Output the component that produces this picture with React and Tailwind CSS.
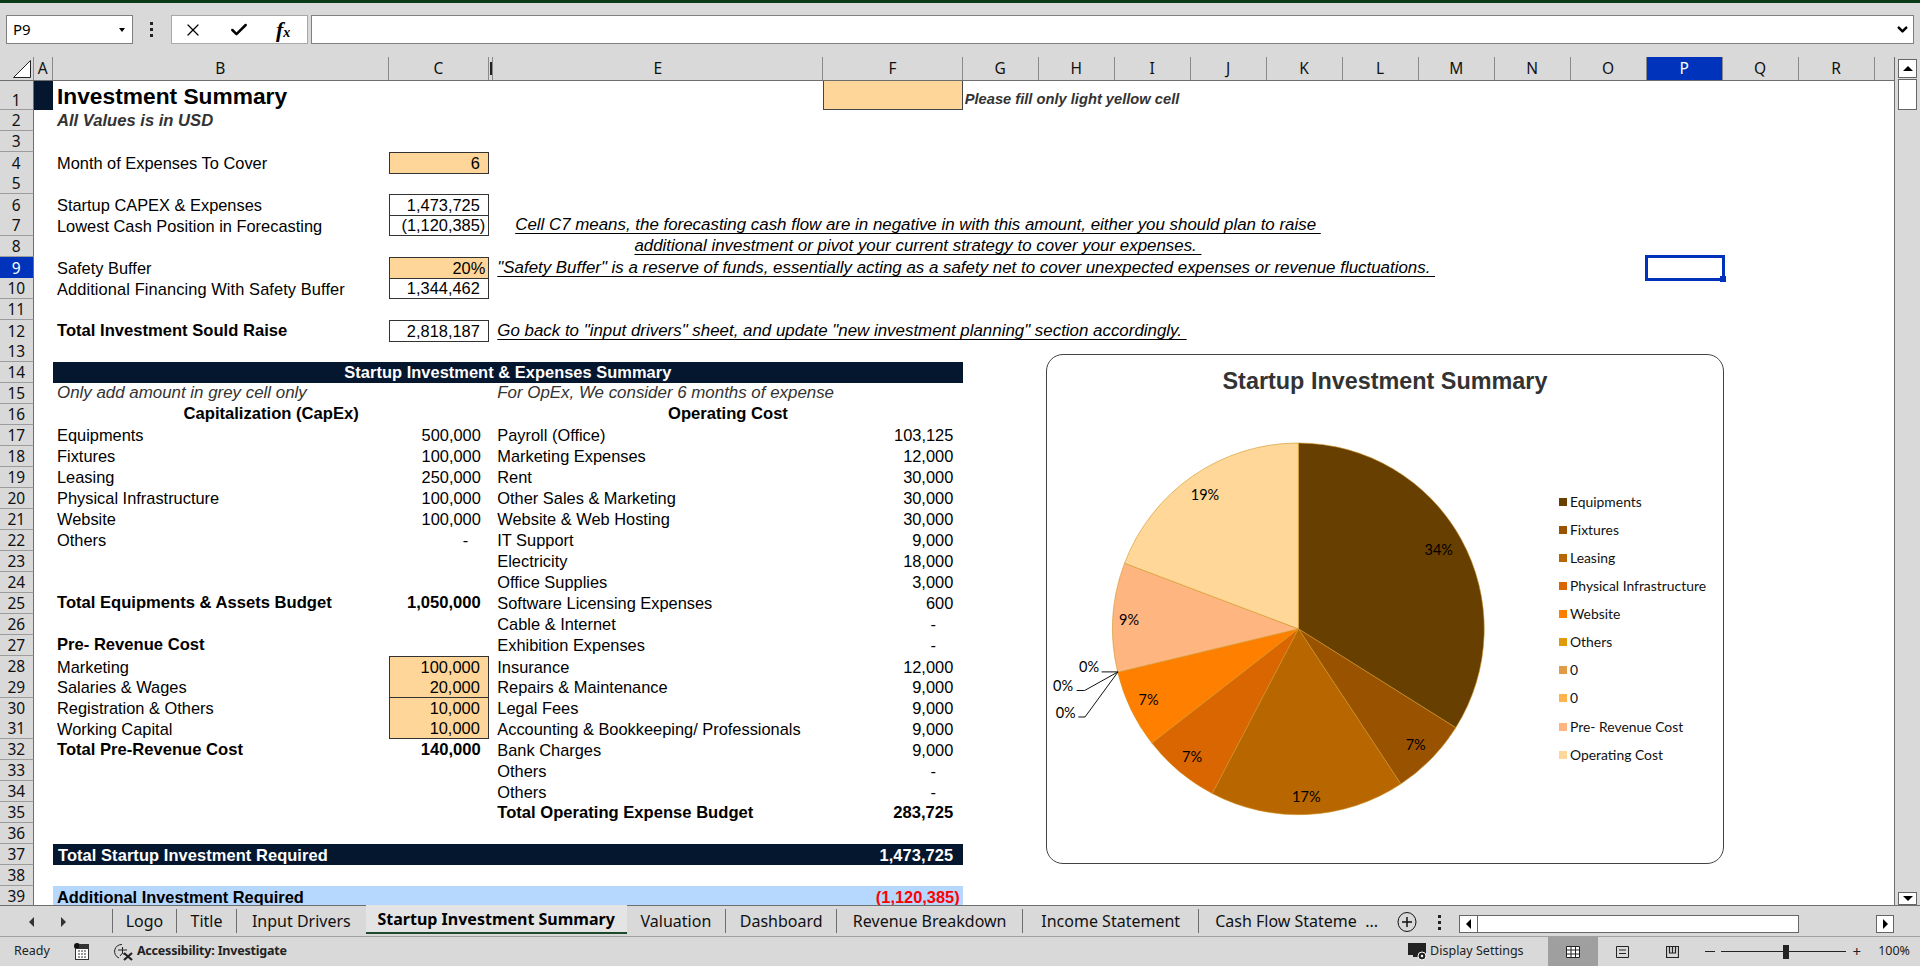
import React from 'react'
import { Check, ChevronDown, X } from 'lucide-react'

const cols = 'grid grid-cols-[33.5px_19.5px_335.7px_100.6px_4px_330px_139.4px_repeat(12,76px)_20px]'
const input = 'bg-[#ffd699]'
const boxed = 'border-x border-b border-[#333333]'
const boxedTop = 'border border-[#333333]'
const bold = 'font-bold text-[16.6px]'
const under = 'underline underline-offset-[3px] decoration-1 italic whitespace-pre text-[16.9px]'

const ledger = [
  { n: 17, b: 'Equipments', c: '500,000', e: 'Payroll (Office)', f: '103,125' },
  { n: 18, b: 'Fixtures', c: '100,000', e: 'Marketing Expenses', f: '12,000' },
  { n: 19, b: 'Leasing', c: '250,000', e: 'Rent', f: '30,000' },
  { n: 20, b: 'Physical Infrastructure', c: '100,000', e: 'Other Sales & Marketing', f: '30,000' },
  { n: 21, b: 'Website', c: '100,000', e: 'Website & Web Hosting', f: '30,000' },
  { n: 22, b: 'Others', c: '-', e: 'IT Support', f: '9,000' },
  { n: 23, e: 'Electricity', f: '18,000' },
  { n: 24, e: 'Office Supplies', f: '3,000' },
  { n: 25, b: 'Total Equipments & Assets Budget', c: '1,050,000', e: 'Software Licensing Expenses', f: '600', bold: true },
  { n: 26, e: 'Cable & Internet', f: '-' },
  { n: 27, b: 'Pre- Revenue Cost', e: 'Exhibition Expenses', f: '-', bold: true },
  { n: 28, b: 'Marketing', c: '100,000', e: 'Insurance', f: '12,000', cell: `${input} ${boxedTop}` },
  { n: 29, b: 'Salaries & Wages', c: '20,000', e: 'Repairs & Maintenance', f: '9,000', cell: `${input} ${boxed}` },
  { n: 30, b: 'Registration & Others', c: '10,000', e: 'Legal Fees', f: '9,000', cell: `${input} ${boxed}` },
  { n: 31, b: 'Working Capital', c: '10,000', e: 'Accounting & Bookkeeping/ Professionals', f: '9,000', cell: `${input} ${boxed}` },
  { n: 32, b: 'Total Pre-Revenue Cost', c: '140,000', e: 'Bank Charges', f: '9,000', bold: true },
  { n: 33, e: 'Others', f: '-' },
  { n: 34, e: 'Others', f: '-' },
  { n: 35, e: 'Total Operating Expense Budget', f: '283,725', eBold: true },
]

const letters = ['G', 'H', 'I', 'J', 'K', 'L', 'M', 'N', 'O', 'P', 'Q', 'R']

const pie = [
  { name: 'Equipments', value: 500000, color: '#673f00' },
  { name: 'Fixtures', value: 100000, color: '#995200' },
  { name: 'Leasing', value: 250000, color: '#b86600' },
  { name: 'Physical Infrastructure', value: 100000, color: '#d96600' },
  { name: 'Website', value: 100000, color: '#ff8000' },
  { name: 'Others', value: 0, color: '#e09b0b' },
  { name: '0', value: 0, color: '#df9b45' },
  { name: '0', value: 0, color: '#ffb34d' },
  { name: 'Pre- Revenue Cost', value: 140000, color: '#ffb580' },
  { name: 'Operating Cost', value: 283725, color: '#ffd899' },
]

const pieLabels = [
  ['34%', 391.7, 194.7],
  ['7%', 368.7, 390.4],
  ['17%', 259.3, 442.4],
  ['7%', 145, 402],
  ['7%', 101.5, 344.6],
  ['9%', 82, 264.6],
  ['19%', 158, 140.4],
  ['0%', 42, 311.7],
  ['0%', 16, 331.4],
  ['0%', 18.7, 358],
]

const tabs = [
  ['Logo', 'w-[64px]'],
  ['Title', 'w-[60px]'],
  ['Input Drivers', 'w-[129.7px]'],
]
const tabsAfter = [
  ['Valuation', 'w-[98.5px]'],
  ['Dashboard', 'w-[111px]'],
  ['Revenue Breakdown', 'w-[186px]'],
  ['Income Statement', 'w-[176px]'],
  ['Cash Flow Stateme  ...', 'w-[198.5px]'],
]

function slicePath(start, end) {
  const cx = 251.4
  const cy = 273.85
  const r = 185.85
  const a = (start * Math.PI) / 180
  const b = (end * Math.PI) / 180
  const large = end - start > 180 ? 1 : 0
  return `M${cx} ${cy}L${cx + r * Math.sin(a)} ${cy - r * Math.cos(a)}A${r} ${r} 0 ${large} 1 ${cx + r * Math.sin(b)} ${cy - r * Math.cos(b)}Z`
}

function Row({ n, tall, active, children }) {
  return (
    <div className={`${cols} ${tall ? 'h-[29.4px]' : 'h-[20.98px]'}`}>
      <div
        className={`flex justify-center border-r border-b border-r-[#6e6e6e] border-b-[#9c9c9c] font-['Noto_Sans',sans-serif] text-[15.5px] leading-[14px] ${
          tall ? 'items-end pb-[2px]' : 'items-center'
        } ${active ? 'bg-[#0033bb] text-white' : 'bg-[#d9d9d9] text-[#111111]'}`}
      >
        {n}
      </div>
      {children}
    </div>
  )
}

const B = ({ children, className = '' }) => (
  <div className={`col-start-3 flex items-center whitespace-nowrap pl-[4px] ${className}`}>{children}</div>
)

const C = ({ children, className = '' }) => (
  <div className={`col-start-4 flex items-center justify-end whitespace-nowrap ${className}`}>{children}</div>
)

const E = ({ children, className = '' }) => (
  <div className={`col-start-6 flex items-center whitespace-nowrap pl-[4px] ${className}`}>{children}</div>
)

function LedgerRow({ item }) {
  const dashC = item.c === '-'
  const dashF = item.f === '-'
  return (
    <Row n={item.n}>
      {item.b && <B className={item.bold ? bold : ''}>{item.b}</B>}
      {item.c && (
        <C className={`${dashC ? 'pr-[21px]' : 'pr-[8.5px]'} ${item.cell || ''} ${item.bold ? bold : ''}`}>{item.c}</C>
      )}
      <E className={item.eBold ? bold : ''}>{item.e}</E>
      <div
        className={`col-start-7 flex items-center justify-end ${dashF ? 'pr-[26.7px]' : 'pr-[9.4px]'} ${
          item.eBold ? bold : ''
        }`}
      >
        {item.f}
      </div>
    </Row>
  )
}

function FormulaBar() {
  return (
    <div className="flex h-[54px] items-start pt-3">
      <div className="ml-[6px] flex h-[29px] w-[127px] items-center justify-between border border-[#808080] bg-white pl-[6px] pr-[7px] font-['Noto_Sans',sans-serif] text-[15px]">
        P9
        <span className="h-0 w-0 border-x-[3.5px] border-t-[4px] border-x-transparent border-t-black" />
      </div>
      <div className="ml-[17px] flex h-[29px] w-[3px] flex-col items-center justify-center gap-[3px]">
        <span className="h-[3px] w-[3px] bg-[#222222]" />
        <span className="h-[3px] w-[3px] bg-[#222222]" />
        <span className="h-[3px] w-[3px] bg-[#222222]" />
      </div>
      <div className="ml-[18px] flex h-[29px] w-[136.5px] items-center border border-[#a8a8a8] bg-white">
        <X className="ml-[11px] h-[20px] w-[20px]" strokeWidth={1.5} />
        <Check className="ml-[26px] h-[20px] w-[20px]" strokeWidth={3} />
        <span className="ml-[27px] font-['Liberation_Serif',serif] text-[22px] font-bold italic leading-none">
          f<span className="text-[14px]">x</span>
        </span>
      </div>
      <div className="ml-[3.5px] mr-[6.5px] flex h-[29px] flex-1 items-center justify-end border border-[#808080] bg-white pr-[3px]">
        <ChevronDown className="h-[15px] w-[15px]" strokeWidth={4} />
      </div>
    </div>
  )
}

function ColumnHeader() {
  const head = "flex items-center justify-center border-r border-[#8a8a8a] font-['Noto_Sans',sans-serif] text-[15.5px] text-[#111111]"
  return (
    <div className={`${cols} h-[24px] border-b border-[#6e6e6e]`}>
      <div className="flex items-end justify-end border-r border-[#8a8a8a] pb-[2px] pr-[2px]">
        <svg width="18" height="18" viewBox="0 0 18 18">
          <path d="M0.5 17.5L17.5 0.5V17.5Z" fill="white" stroke="#222222" />
        </svg>
      </div>
      <div className={head}>A</div>
      <div className={head}>B</div>
      <div className={head}>C</div>
      <div className="flex items-center justify-center border-r border-[#8a8a8a]">
        <span className="h-[13px] w-[1.5px] bg-[#222222]" />
      </div>
      <div className={head}>E</div>
      <div className={head}>F</div>
      {letters.map((l) => (
        <div key={l} className={l === 'P' ? `${head} bg-[#0033bb] !text-white` : head}>
          {l}
        </div>
      ))}
    </div>
  )
}

function Chart() {
  let angle = 0
  const slices = pie
    .filter((s) => s.value > 0)
    .map((s) => {
      const sweep = (s.value / 1473725) * 360
      const d = slicePath(angle, angle + sweep)
      angle += sweep
      return { ...s, d }
    })

  return (
    <div className="absolute left-[1046px] top-[273.3px] h-[509.5px] w-[678px] rounded-[17px] border border-[#444444] bg-white">
      <div className="pt-[10.7px] text-center text-[23.4px] font-bold leading-[30px] text-[#333333]">Startup Investment Summary</div>
      <svg className="absolute left-0 top-0" width="676" height="507" viewBox="0 0 676 507">
        {slices.map((s) => (
          <path key={s.name} d={s.d} fill={s.color} stroke="#cf9322" strokeWidth="0.6" />
        ))}
        <g className="font-['Lato',sans-serif] text-[14.5px]" textAnchor="middle" fill="#000000">
          {pieLabels.map(([t, x, y], i) => (
            <text key={i} x={x} y={y + 5}>
              {t}
            </text>
          ))}
        </g>
        <g fill="none" stroke="#111111" strokeWidth="1">
          <path d="M54.6 316.9H71" />
          <path d="M29.6 335.5H37.6L71 316.9" />
          <path d="M31.3 362H38L71 316.9" />
        </g>
      </svg>
      <div className="absolute left-[512px] top-[132.7px] flex flex-col font-['Lato',sans-serif] text-[13.9px]">
        {pie.map((s, i) => (
          <div key={i} className="flex h-[28.07px] items-center gap-[3px] text-[#111111]">
            <span className="h-[8px] w-[8px]" style={{ backgroundColor: s.color }} />
            {s.name}
          </div>
        ))}
      </div>
    </div>
  )
}

function Sheet() {
  return (
    <div className="flex h-[848px] overflow-hidden">
      <div className="w-[1895px] shrink-0 border-r border-[#6e6e6e]">
        <ColumnHeader />
        <div className="relative h-[824px] overflow-hidden bg-white font-['Liberation_Sans',Arial,sans-serif] text-[16.4px] leading-[20px] text-black">
          <Row n={1} tall>
            <div className="col-start-2 bg-[#04172f]" />
            <B className="pt-[1px] text-[22.75px] font-bold">Investment Summary</B>
            <div className="col-start-7 border-x border-b border-[#444444] bg-[#ffd699]" />
            <div className="col-start-8 flex items-center whitespace-nowrap pl-[2px] pt-[7px] text-[14.7px] font-bold italic text-[#333333]">
              Please fill only light yellow cell
            </div>
          </Row>
          <Row n={2}>
            <B className="pt-[1px] text-[16.6px] font-bold italic text-[#333333]">All Values is in USD</B>
          </Row>
          <Row n={3} />
          <Row n={4}>
            <B>Month of Expenses To Cover</B>
            <C className={`pr-[8.5px] ${input} ${boxedTop}`}>6</C>
          </Row>
          <Row n={5} />
          <Row n={6}>
            <B>Startup CAPEX &amp; Expenses</B>
            <C className={`pr-[8.5px] ${boxedTop}`}>1,473,725</C>
          </Row>
          <Row n={7}>
            <B>Lowest Cash Position in Forecasting</B>
            <C className={`pr-[3px] ${boxed}`}>(1,120,385)</C>
            <div className={`col-start-6 col-span-7 text-center ${under}`}>Cell C7 means, the forecasting cash flow are in negative in with this amount, either you should plan to raise </div>
          </Row>
          <Row n={8}>
            <div className={`col-start-6 col-span-7 text-center ${under}`}>additional investment or pivot your current strategy to cover your expenses. </div>
          </Row>
          <Row n={9} active>
            <B>Safety Buffer</B>
            <C className={`pr-[3px] ${input} ${boxedTop}`}>20%</C>
            <E className={under}>"Safety Buffer" is a reserve of funds, essentially acting as a safety net to cover unexpected expenses or revenue fluctuations. </E>
            <div className="relative col-start-17">
              <div className="absolute -inset-x-[2px] -inset-y-[2px] border-[3px] border-[#0033bb]">
                <span className="absolute -bottom-[4px] -right-[4px] h-[6px] w-[6px] bg-[#0033bb]" />
              </div>
            </div>
          </Row>
          <Row n={10}>
            <B className="tracking-[0.1px]">Additional Financing With Safety Buffer</B>
            <C className={`pr-[8.5px] ${boxed}`}>1,344,462</C>
          </Row>
          <Row n={11} />
          <Row n={12}>
            <B className={bold}>Total Investment Sould Raise</B>
            <C className={`pr-[8.5px] ${boxedTop}`}>2,818,187</C>
            <E className={under}>Go back to "input drivers" sheet, and update "new investment planning" section accordingly. </E>
          </Row>
          <Row n={13} />
          <Row n={14}>
            <div className="col-start-3 col-span-5 bg-[#04172f] text-center font-bold tracking-[0.05px] text-white">Startup Investment &amp; Expenses Summary</div>
          </Row>
          <Row n={15}>
            <B className="text-[16.9px] italic text-[#333333]">Only add amount in grey cell only</B>
            <E className="text-[16.9px] italic text-[#333333]">For OpEx, We consider 6 months of expense</E>
          </Row>
          <Row n={16}>
            <div className={`col-start-3 col-span-2 text-center ${bold}`}>Capitalization (CapEx)</div>
            <div className={`col-start-6 col-span-2 text-center ${bold}`}>Operating Cost</div>
          </Row>
          {ledger.map((item) => (
            <LedgerRow key={item.n} item={item} />
          ))}
          <Row n={36} />
          <Row n={37}>
            <div className="col-start-3 col-span-5 flex items-center justify-between bg-[#04172f] pl-[5px] pr-[9.4px] font-bold tracking-[0.1px] text-white">
              <span>Total Startup Investment Required</span>
              <span>1,473,725</span>
            </div>
          </Row>
          <Row n={38} />
          <Row n={39}>
            <div className="col-start-3 col-span-5 flex items-center justify-between bg-[#b6d7fe] pl-[4px] pr-[3px] font-bold leading-[14px]">
              <span>Additional Investment Required</span>
              <span className="text-[#ff0000]">(1,120,385)</span>
            </div>
          </Row>
          <Chart />
        </div>
      </div>
      <div className="flex flex-1 flex-col items-center pt-[2px]">
        <div className="flex h-[19px] w-[19px] items-center justify-center border border-[#666666] bg-white">
          <span className="h-0 w-0 border-x-[5px] border-b-[5px] border-x-transparent border-b-black" />
        </div>
        <div className="mt-[1px] h-[31px] w-[19px] border border-[#666666] bg-white" />
        <div className="mt-auto flex h-[13px] w-[19px] items-center justify-center border border-[#666666] bg-white">
          <span className="h-0 w-0 border-x-[5px] border-t-[5px] border-x-transparent border-t-black" />
        </div>
      </div>
    </div>
  )
}

function TabBar() {
  const tab = "flex h-[24px] shrink-0 items-center justify-center whitespace-pre border-l border-[#6e6e6e] text-[#111111]"
  return (
    <div className="flex h-[32px] border-b border-[#a0a0a0] font-['Noto_Sans',sans-serif] text-[16px]">
      <div className="flex h-[32px] w-[112px] shrink-0 items-center border-t border-[#6e6e6e]">
        <span className="ml-[29px] h-0 w-0 border-y-[5px] border-r-[5px] border-y-transparent border-r-[#333333]" />
        <span className="ml-[27px] h-0 w-0 border-y-[5px] border-l-[5px] border-y-transparent border-l-[#333333]" />
      </div>
      <div className="flex border-t border-[#6e6e6e] pt-[3px]">
        {tabs.map(([t, w]) => (
          <div key={t} className={`${tab} ${w}`}>
            {t}
          </div>
        ))}
      </div>
      <div className="flex h-[29px] w-[261px] shrink-0 items-center justify-center border-b-[2px] border-[#1c4a2a] bg-[#e4e4e4] font-bold text-black">
        Startup Investment Summary
      </div>
      <div className="flex flex-1 items-start border-t border-[#6e6e6e] pt-[3px]">
        {tabsAfter.map(([t, w], i) => (
          <div key={t} className={`${tab} ${w} ${i === 0 ? '!border-l-0' : ''} ${i === 4 ? '!justify-start pl-[16px]' : ''}`}>
            {t}
          </div>
        ))}
        <svg className="mt-[3px] shrink-0" width="20" height="20" viewBox="0 0 20 20" fill="none" stroke="#111111">
          <ellipse cx="10" cy="10" rx="9" ry="9.5" />
          <path d="M5 10H15M10 5V15" strokeWidth="1.5" />
        </svg>
        <div className="ml-[21px] mt-[6px] flex shrink-0 flex-col gap-[3px]">
          <span className="h-[3px] w-[3px] bg-[#222222]" />
          <span className="h-[3px] w-[3px] bg-[#222222]" />
          <span className="h-[3px] w-[3px] bg-[#222222]" />
        </div>
        <div className="ml-[18px] mt-[6px] flex h-[18px] w-[340.6px] shrink-0 border border-[#666666] bg-white">
          <div className="flex w-[18px] items-center justify-center border-r border-[#666666]">
            <span className="h-0 w-0 border-y-[5px] border-r-[5px] border-y-transparent border-r-black" />
          </div>
        </div>
        <div className="ml-[77px] mt-[6px] flex h-[18px] w-[18px] shrink-0 items-center justify-center border border-[#666666] bg-white">
          <span className="h-0 w-0 border-y-[5px] border-l-[5px] border-y-transparent border-l-black" />
        </div>
      </div>
    </div>
  )
}

function StatusBar() {
  return (
    <div className="flex h-[29px] items-center font-['Noto_Sans',sans-serif] text-[12.5px] text-[#222222]">
      <span className="ml-[14px]">Ready</span>
      <svg className="ml-[24px]" width="16" height="18" viewBox="0 0 16 18">
        <circle cx="3" cy="3" r="3" fill="#111111" />
        <rect x="5" y="1" width="10" height="4" fill="#333333" />
        <rect x="1.5" y="5.5" width="13" height="11" fill="white" stroke="#333333" />
        <path d="M4 8H12M4 11H12M4 14H12" stroke="#333333" strokeDasharray="2 1" />
      </svg>
      <svg className="ml-[24px]" width="20" height="18" viewBox="0 0 20 18" fill="none" stroke="#222222">
        <path d="M8 1.5A7 7 0 0 0 5 15" />
        <path d="M4 7H13M8.5 4V10L6 13M8.5 10L10.5 12" />
        <path d="M10 10L18 17M18 10L10 17" strokeWidth="2.2" />
      </svg>
      <span className="ml-[3px] font-bold tracking-[-0.2px]">Accessibility: Investigate</span>
      <div className="ml-auto flex items-center">
        <svg width="20" height="18" viewBox="0 0 20 18">
          <rect x="0" y="0" width="18" height="12" fill="#222222" />
          <rect x="5" y="12" width="6" height="2" fill="#222222" />
          <circle cx="14" cy="13" r="4" fill="#222222" stroke="white" />
          <circle cx="14" cy="13" r="1.2" fill="white" />
        </svg>
        <span className="ml-[2px]">Display Settings</span>
      </div>
      <div className="ml-[24px] flex h-full w-[50px] items-center justify-center bg-[#9f9f9f]">
        <svg width="14" height="12" viewBox="0 0 14 12" fill="white" stroke="#222222">
          <path d="M0.5 0.5H13.5V11.5H0.5ZM0.5 4H13.5M0.5 8H13.5M5 0.5V11.5M9.5 0.5V11.5" />
        </svg>
      </div>
      <svg className="ml-[18px]" width="13" height="12" viewBox="0 0 13 12" fill="none" stroke="#222222">
        <path d="M0.5 0.5H12.5V11.5H0.5ZM3 4H10M3 7.5H10" />
      </svg>
      <svg className="ml-[37px]" width="13" height="12" viewBox="0 0 13 12" fill="none" stroke="#222222">
        <path d="M0.5 0.5H12.5V11.5H0.5ZM3.5 0.5V7H6.5V0.5M6.5 7H9.5V0.5" strokeWidth="1.2" />
      </svg>
      <span className="ml-[26px] h-px w-[10px] bg-[#222222]" />
      <div className="relative ml-[6px] flex h-[14px] w-[125px] items-center">
        <span className="h-px w-full bg-[#222222]" />
        <span className="absolute left-[62px] h-[14px] w-[6px] bg-[#222222]" />
      </div>
      <span className="ml-[7px] text-[15px] leading-none">+</span>
      <span className="ml-[17px] mr-[10px]">100%</span>
    </div>
  )
}

export default function App() {
  return (
    <div className="flex h-[966px] w-[1920px] flex-col overflow-hidden bg-[#d9d9d9]">
      <div className="h-[3px] shrink-0 bg-[#0a3a16]" />
      <FormulaBar />
      <Sheet />
      <TabBar />
      <StatusBar />
    </div>
  )
}
